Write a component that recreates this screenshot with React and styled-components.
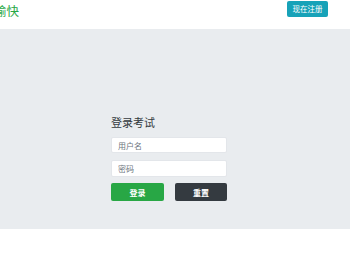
import React from "react";
import styled, { createGlobalStyle } from "styled-components";

const Global = createGlobalStyle`
  html, body { margin: 0; padding: 0; background: #fff; overflow: hidden; }
  body { font-family: "Noto Sans CJK SC", "Liberation Sans", sans-serif; }
  * { box-sizing: border-box; }
`;

const Header = styled.header`
  height: 29px;
  background: #fff;
  display: flex;
  justify-content: space-between;
  align-items: flex-start;
  padding: 1px 22px 0 0;
  overflow: hidden;
`;

const Brand = styled.div`
  color: #28a745;
  font-size: 12.5px;
  line-height: 20px;
  margin-left: -6px;
  white-space: nowrap;
`;

const RegisterButton = styled.button`
  width: 41px;
  height: 16px;
  padding: 0;
  border: none;
  border-radius: 2px;
  background: #17a2b8;
  color: #fff;
  font-family: inherit;
  font-size: 7.5px;
  line-height: 16px;
  cursor: pointer;
`;

const Jumbo = styled.main`
  height: 200px;
  background: #e9ecef;
  padding: 85px 0 0 111px;
`;

const Form = styled.form`
  width: 116px;
  display: flex;
  flex-direction: column;
`;

const Title = styled.h1`
  margin: 0 0 7px;
  font-size: 11px;
  line-height: 16px;
  font-weight: 400;
  color: #343a40;
`;

const Input = styled.input`
  width: 100%;
  height: ${(p) => p.$h}px;
  margin-bottom: ${(p) => p.$mb}px;
  padding: 0 6px;
  border: 1px solid #e3e6ea;
  border-radius: 2px;
  background: #fff;
  font-family: inherit;
  font-size: 8px;
  color: #495057;
  outline: none;
  &::placeholder { color: #6c757d; }
`;

const Buttons = styled.div`
  display: grid;
  grid-template-columns: 53px 52px;
  column-gap: 11px;
`;

const ActionButton = styled.button`
  height: 18px;
  padding: 0;
  border: none;
  border-radius: 2px;
  background: ${(p) => p.$bg};
  color: #fff;
  font-family: inherit;
  font-size: 8px;
  font-weight: 700;
  cursor: pointer;
`;

export default function App() {
  return (
    <>
      <Global />
      <Header>
        <Brand>愉快</Brand>
        <RegisterButton>现在注册</RegisterButton>
      </Header>
      <Jumbo>
        <Form onSubmit={(e) => e.preventDefault()}>
          <Title>登录考试</Title>
          <Input $h={16} $mb={7} placeholder="用户名" />
          <Input $h={17} $mb={6} type="password" placeholder="密码" />
          <Buttons>
            <ActionButton $bg="#28a745">登录</ActionButton>
            <ActionButton $bg="#343a40" type="reset">重置</ActionButton>
          </Buttons>
        </Form>
      </Jumbo>
    </>
  );
}
